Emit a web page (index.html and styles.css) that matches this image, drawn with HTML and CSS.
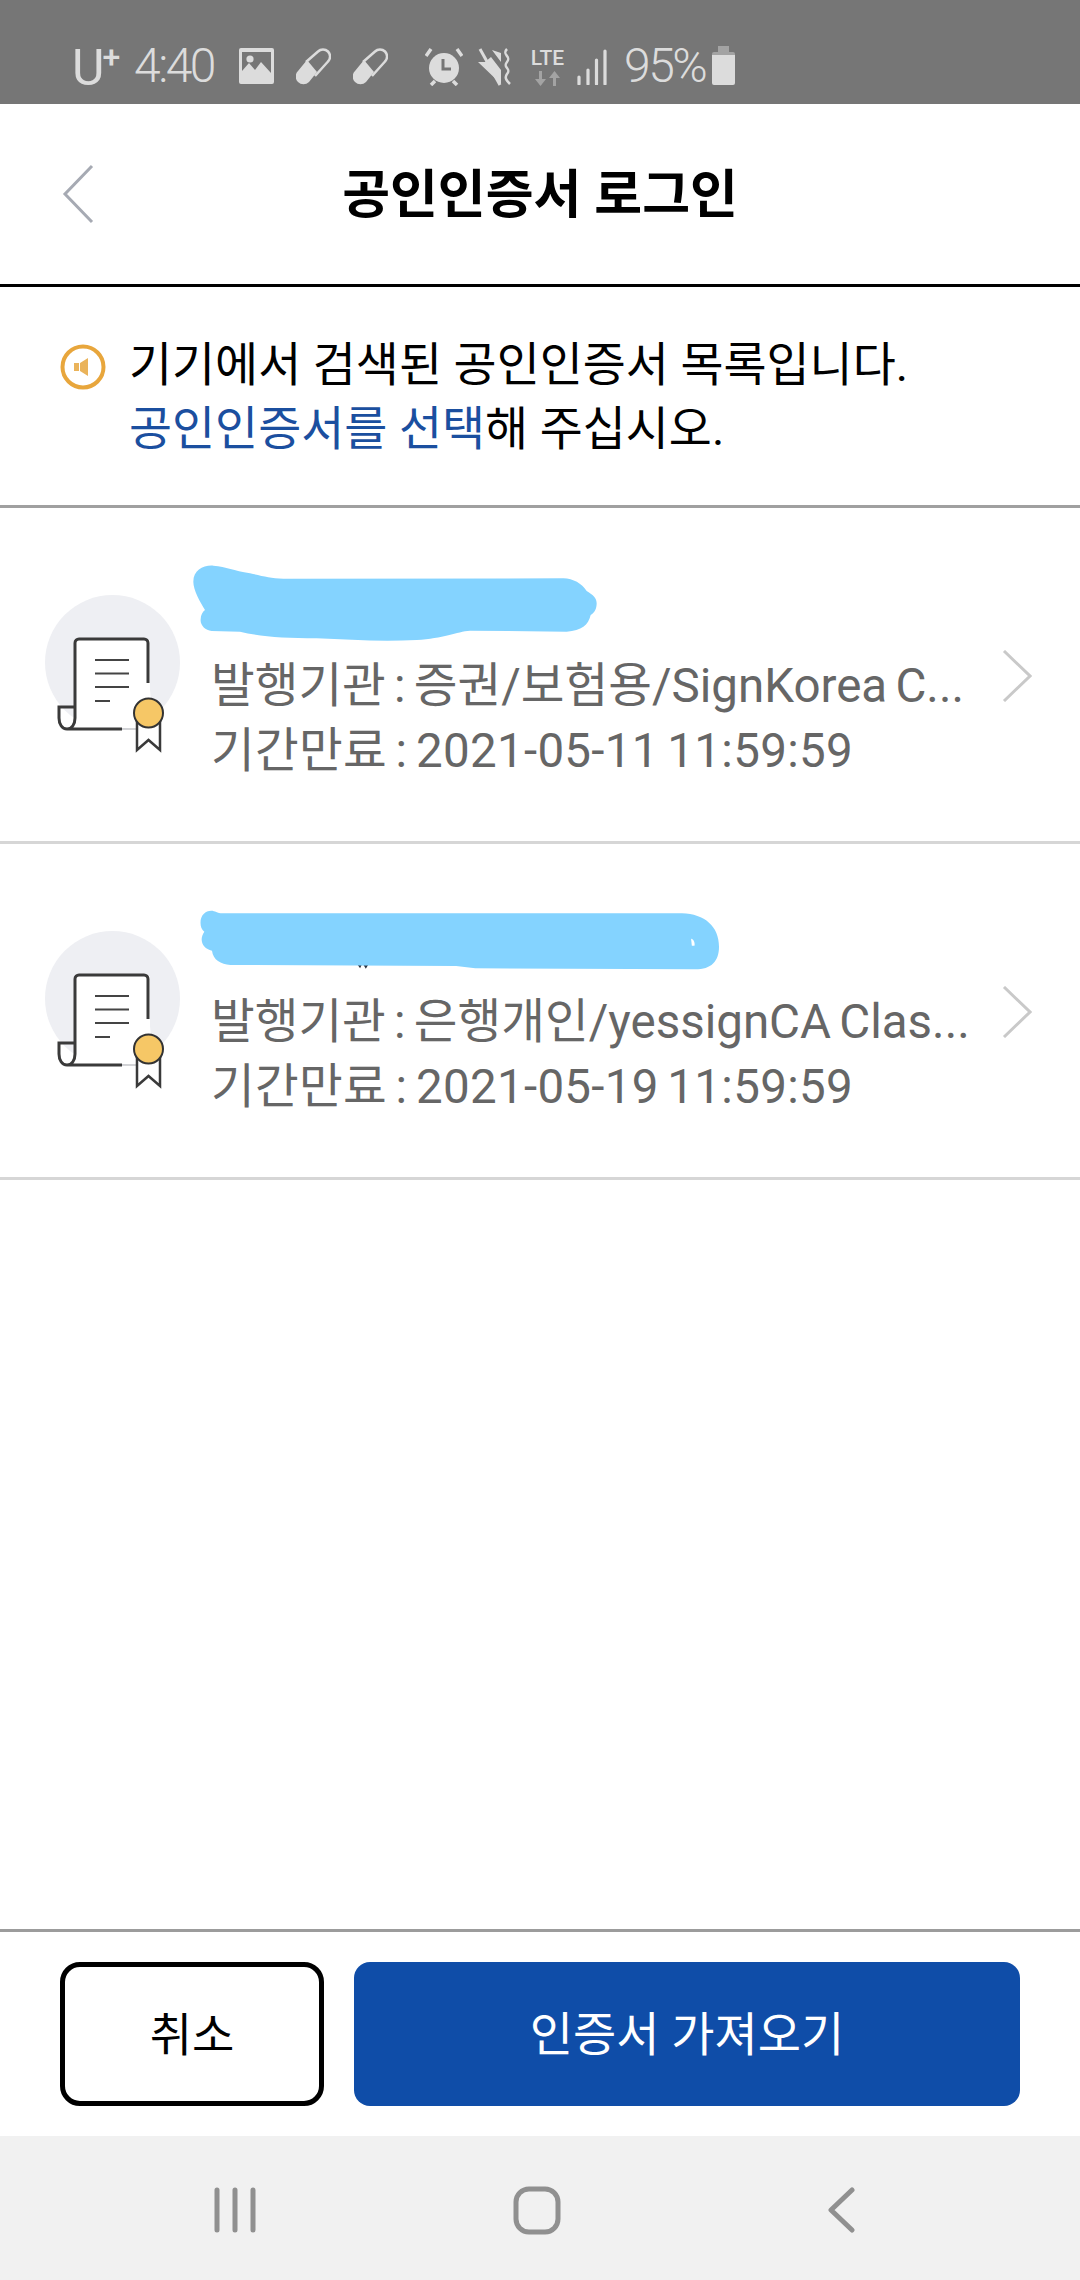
FILE: index.html
```html
<!DOCTYPE html>
<html lang="ko">
<head>
    <meta charset="UTF-8">
    <meta name="viewport" content="width=device-width, initial-scale=1.0">
    <title>공인인증서 로그인</title>
    <link rel="stylesheet" href="styles.css">
</head>
<body>
    <div class="status-bar">
        <span class="carrier">U<span class="carrier-plus">+</span></span>
        <span class="status-text time">4:40</span>
        <svg class="st-pic" width="35" height="36" viewBox="0 0 35 36"><path fill="#dcdcdc" fill-rule="evenodd" d="M2 0h31a2 2 0 0 1 2 2v32a2 2 0 0 1-2 2H2a2 2 0 0 1-2-2V2a2 2 0 0 1 2-2zM3 4v19l7-8 6 7 6-8 10 11V4z"/><circle cx="11" cy="11" r="3.600" fill="#dcdcdc"/></svg>
        <svg class="st-pill" width="35" height="37" viewBox="0 0 35 37"><path fill="none" stroke="#dcdcdc" stroke-width="2.500" d="M10 14 22 3.500a7 7 0 0 1 10 10L19 28"/><path fill="#dcdcdc" d="M11 12 21 24 13 34a7.500 7.500 0 0 1-11-11z"/></svg>
        <svg class="st-pill" width="35" height="37" viewBox="0 0 35 37"><path fill="none" stroke="#dcdcdc" stroke-width="2.500" d="M10 14 22 3.500a7 7 0 0 1 10 10L19 28"/><path fill="#dcdcdc" d="M11 12 21 24 13 34a7.500 7.500 0 0 1-11-11z"/></svg>
        <svg class="st-alarm" width="38" height="38" viewBox="0 0 38 38"><circle cx="19" cy="20" r="15" fill="#dcdcdc"/><path fill="none" stroke="#767676" stroke-width="3" d="M18 11v10h8"/><path stroke="#dcdcdc" stroke-width="3.500" d="M1 8 6 1M37 8 32 1M6 37l4-4M32 37l-4-4"/></svg>
        <svg class="st-mute" width="34" height="38" viewBox="0 0 34 38"><path fill="#dcdcdc" d="M0 14h7L13 9l10 13v14zM14 2l9 12V5z"/><path stroke="#dcdcdc" stroke-width="3" d="M2 1 22 37"/><path fill="none" stroke="#dcdcdc" stroke-width="2.500" d="M29 1c-6 6 5 7 0 13s5 6 0 12c-3 4 0 7 3 10"/></svg>
        <div class="st-lte">
            <span class="lte-label">LTE</span>
            <svg width="27" height="15" viewBox="0 0 27 15"><path fill="#a3a3a3" d="M5 0h3v8h4l-5.500 7L1 8h4zM19 15h3V7h4L20.500 0 15 7h4z"/></svg>
        </div>
        <svg class="st-signal" width="30" height="36" viewBox="0 0 30 36"><path stroke="#dcdcdc" stroke-width="3.200" stroke-linecap="round" d="M2 35v-7M11 35V21M19.500 35V11M28 35V2"/></svg>
        <span class="status-text battery-text">95%</span>
        <svg class="st-battery" width="25" height="39" viewBox="0 0 25 39"><path fill="#dcdcdc" d="M1 9h23v28a2 2 0 0 1-2 2H3a2 2 0 0 1-2-2z"/><path fill="#a3a3a3" d="M7 0h11v6h4a2 2 0 0 1 2 2v1H1V8a2 2 0 0 1 2-2h4z"/></svg>
    </div>

    <header class="top-bar">
        <svg class="back-icon" width="32" height="60" viewBox="0 0 32 60"><path fill="none" stroke="#a6aab3" stroke-width="3" d="M30 2 3 30l27 28"/></svg>
        <h1 class="page-title">공인인증서 로그인</h1>
    </header>

    <section class="notice">
        <svg class="notice-icon" width="46" height="46" viewBox="0 0 46 46"><circle cx="23" cy="23" r="20.500" fill="none" stroke="#e8a63c" stroke-width="4"/><path fill="#eab35a" d="M14 19h5v8h-5zM20 19l8-5v18l-8-5z"/></svg>
        <p class="notice-text">기기에서 검색된 공인인증서 목록입니다.<br><span class="notice-link">공인인증서를 선택</span>해 주십시오.</p>
    </section>

    <main class="cert-list">
        <div class="cert-row">
            <svg class="blob" style="left:150px;top:32px" width="500" height="120" viewBox="0 0 1500 360"><path fill="#84d3ff" d="M130 125C130 90 160 75 190 77C230 80 250 92 300 100C340 108 360 115 400 116L1240 115C1270 116 1295 130 1310 153C1330 165 1340 175 1340 190C1340 205 1335 218 1322 225C1315 255 1295 272 1250 275L960 272C920 275 880 295 800 300C700 305 600 300 500 295C400 295 330 290 270 275L185 273C165 272 150 255 152 238C152 225 158 215 165 210C150 185 130 150 130 125Z"/></svg>
            <svg class="cert-icon" width="140" height="165" viewBox="45 595 140 165">
                <circle cx="112.500" cy="662.500" r="67.500" fill="#eeeff3"/>
                <path fill="#fff" d="M75 640h75v50l2 20-12 18H65l10-10z"/>
                <path fill="none" stroke="#3a3a3a" stroke-width="3" d="M148 683V643a4 4 0 0 0-4-4H79a4 4 0 0 0-4 4v75c0 6-3 11-8 11s-8-5-8-11v-11h16M67 729h55"/>
                <path stroke="#c4c6ca" stroke-width="1.500" d="M122 729h16"/>
                <path stroke="#444" stroke-width="1.800" d="M95 660h34M95 673.500h34M95 687h34M95 701h15"/>
                <path fill="#fff" stroke="#3a3a3a" stroke-width="2.500" d="M137 720v30l11.500-10 11.500 10v-30"/>
                <circle cx="148.500" cy="713" r="14.500" fill="#f6c766" stroke="#333" stroke-width="2"/>
            </svg>
            <div class="cert-info">
                <div class="cert-line">발행기관 : 증권/보험용/SignKorea C...</div>
                <div class="cert-line cert-date">기간만료 : 2021-05-11 11:59:59</div>
            </div>
            <svg class="row-chevron" width="30" height="52" viewBox="0 0 30 52"><path fill="none" stroke="#c9c9c9" stroke-width="3" d="M2 1l26 25L2 51"/></svg>
        </div>
        <div class="cert-row">
            <svg class="blob" style="left:150px;top:36px" width="600" height="120" viewBox="0 0 1568 360" preserveAspectRatio="none"><path fill="#2f3542" d="M543 255h10l-4 10zM558 255h12l-6 11z"/><path fill="#84d3ff" d="M132 128C132 105 145 92 160 92C170 92 175 100 190 100L1390 100C1450 102 1487 140 1487 200C1487 245 1465 270 1420 268L850 265L800 258L210 255C185 252 165 240 162 212C145 208 135 195 135 178C135 170 138 162 142 155C135 148 132 140 132 128Z"/><path fill="#fff" d="M1414 176c8 2 10 12 9 21h-7z"/></svg>
            <svg class="cert-icon" width="140" height="165" viewBox="45 595 140 165">
                <circle cx="112.500" cy="662.500" r="67.500" fill="#eeeff3"/>
                <path fill="#fff" d="M75 640h75v50l2 20-12 18H65l10-10z"/>
                <path fill="none" stroke="#3a3a3a" stroke-width="3" d="M148 683V643a4 4 0 0 0-4-4H79a4 4 0 0 0-4 4v75c0 6-3 11-8 11s-8-5-8-11v-11h16M67 729h55"/>
                <path stroke="#c4c6ca" stroke-width="1.500" d="M122 729h16"/>
                <path stroke="#444" stroke-width="1.800" d="M95 660h34M95 673.500h34M95 687h34M95 701h15"/>
                <path fill="#fff" stroke="#3a3a3a" stroke-width="2.500" d="M137 720v30l11.500-10 11.500 10v-30"/>
                <circle cx="148.500" cy="713" r="14.500" fill="#f6c766" stroke="#333" stroke-width="2"/>
            </svg>
            <div class="cert-info">
                <div class="cert-line">발행기관 : 은행개인/yessignCA Clas...</div>
                <div class="cert-line cert-date">기간만료 : 2021-05-19 11:59:59</div>
            </div>
            <svg class="row-chevron" width="30" height="52" viewBox="0 0 30 52"><path fill="none" stroke="#c9c9c9" stroke-width="3" d="M2 1l26 25L2 51"/></svg>
        </div>
    </main>

    <footer class="actions">
        <button class="btn btn-cancel">취소</button>
        <button class="btn btn-import">인증서 가져오기</button>
    </footer>

    <nav class="nav-bar">
        <svg class="nav-recent" width="42" height="46" viewBox="0 0 42 46"><path stroke="#909090" stroke-width="5" stroke-linecap="round" d="M3 3v40M21 3v40M39 3v40"/></svg>
        <svg class="nav-home" width="48" height="49" viewBox="0 0 48 49"><rect x="3" y="3" width="42" height="43" rx="13" fill="none" stroke="#909090" stroke-width="5"/></svg>
        <svg width="30" height="46" viewBox="0 0 30 46"><path fill="none" stroke="#909090" stroke-width="5" stroke-linecap="round" stroke-linejoin="round" d="M26 3 5 23l21 20"/></svg>
    </nav>
</body>
</html>
```

FILE: styles.css
```css
* {
    box-sizing: border-box;
}
body {
    margin: 0;
    width: 1080px;
    height: 2280px;
    display: flex;
    flex-direction: column;
    background: #fff;
    font-family: Roboto, "Noto Sans CJK KR", sans-serif;
    overflow: hidden;
}

/* status bar */
.status-bar {
    height: 104px;
    flex: none;
    display: flex;
    align-items: flex-start;
    padding: 46px 0 0 72px;
    background: #767676;
    color: #dcdcdc;
}
.carrier {
    font-size: 50px;
    line-height: 44px;
    width: 47px;
    font-weight: 400;
    display: flex;
}
.carrier-plus {
    font-size: 32px;
    line-height: 22px;
    font-weight: 500;
    margin-left: -2px;
}
.status-text {
    font-size: 48px;
    font-weight: 300;
    line-height: 40px;
    letter-spacing: -2.500px;
}
.time {
    margin-left: 15px;
    width: 83px;
}
.st-pic {
    margin: 2px 0 0 22px;
}
.st-pill {
    margin: 2px 0 0 22px;
}
.st-alarm {
    margin: 2px 0 0 37px;
}
.st-mute {
    margin: 2px 0 0 15px;
}
.st-lte {
    margin: 1px 0 0 18px;
    width: 35px;
    display: flex;
    flex-direction: column;
    align-items: center;
    gap: 2px;
}
.lte-label {
    font-size: 21px;
    line-height: 22px;
    font-weight: 500;
}
.st-signal {
    margin: 3px 0 0 12px;
}
.battery-text {
    margin-left: 17px;
    width: 80px;
}
.st-battery {
    margin-left: 7px;
}

/* header */
.top-bar {
    height: 183px;
    flex: none;
    display: grid;
    grid-template-columns: 1fr auto 1fr;
    align-items: center;
    padding-left: 62px;
    border-bottom: 3px solid #000;
}
.back-icon {
    margin-bottom: 1px;
}
.page-title {
    margin: 0 0 7px;
    font-size: 52px;
    font-weight: 700;
    color: #000;
    padding-right: 62px;
    white-space: nowrap;
}

/* notice */
.notice {
    height: 221px;
    flex: none;
    display: flex;
    align-items: flex-start;
    padding: 46px 0 0 60px;
    border-bottom: 3px solid #a0a0a0;
}
.notice-icon {
    margin-top: 11px;
}
.notice-text {
    margin: 0 0 0 23px;
    font-size: 46.800px;
    line-height: 64px;
    color: #000;
}
.notice-link {
    color: #1b4f9f;
}

/* list */
.cert-list {
    flex: 1;
}
.cert-row {
    position: relative;
    height: 336px;
    display: flex;
    align-items: flex-start;
    padding: 87px 48px 0 45px;
    border-bottom: 3px solid #d6d6d6;
}
.blob {
    position: absolute;
}
.cert-icon {
    flex: none;
}
.cert-info {
    margin: 59px 0 0 26px;
    font-size: 47.500px;
    line-height: 65px;
    color: #666;
    word-spacing: -3.500px;
}
.cert-line {
    white-space: nowrap;
}
.cert-date {
    letter-spacing: 0.300px;
}
.row-chevron {
    margin: 55px 0 0 auto;
}

/* bottom buttons */
.actions {
    height: 207px;
    flex: none;
    display: flex;
    gap: 30px;
    padding: 30px 60px 30px 60px;
    border-top: 3px solid #9c9c9c;
}
.btn {
    height: 144px;
    border-radius: 16px;
    font-family: inherit;
    font-size: 47px;
    padding: 0 0 7px;
}
.btn-cancel {
    width: 264px;
    flex: none;
    background: #fff;
    color: #000;
    border: 5px solid #000;
    border-radius: 20px;
    font-size: 46px;
}
.btn-import {
    flex: 1;
    background: #0f4da8;
    color: #fff;
    border: none;
}

/* android nav */
.nav-bar {
    height: 144px;
    flex: none;
    display: flex;
    align-items: center;
    padding: 4px 0 0 214px;
    background: #f1f1f1;
}
.nav-recent {
    margin-right: 257px;
}
.nav-home {
    margin-right: 265px;
}
```
